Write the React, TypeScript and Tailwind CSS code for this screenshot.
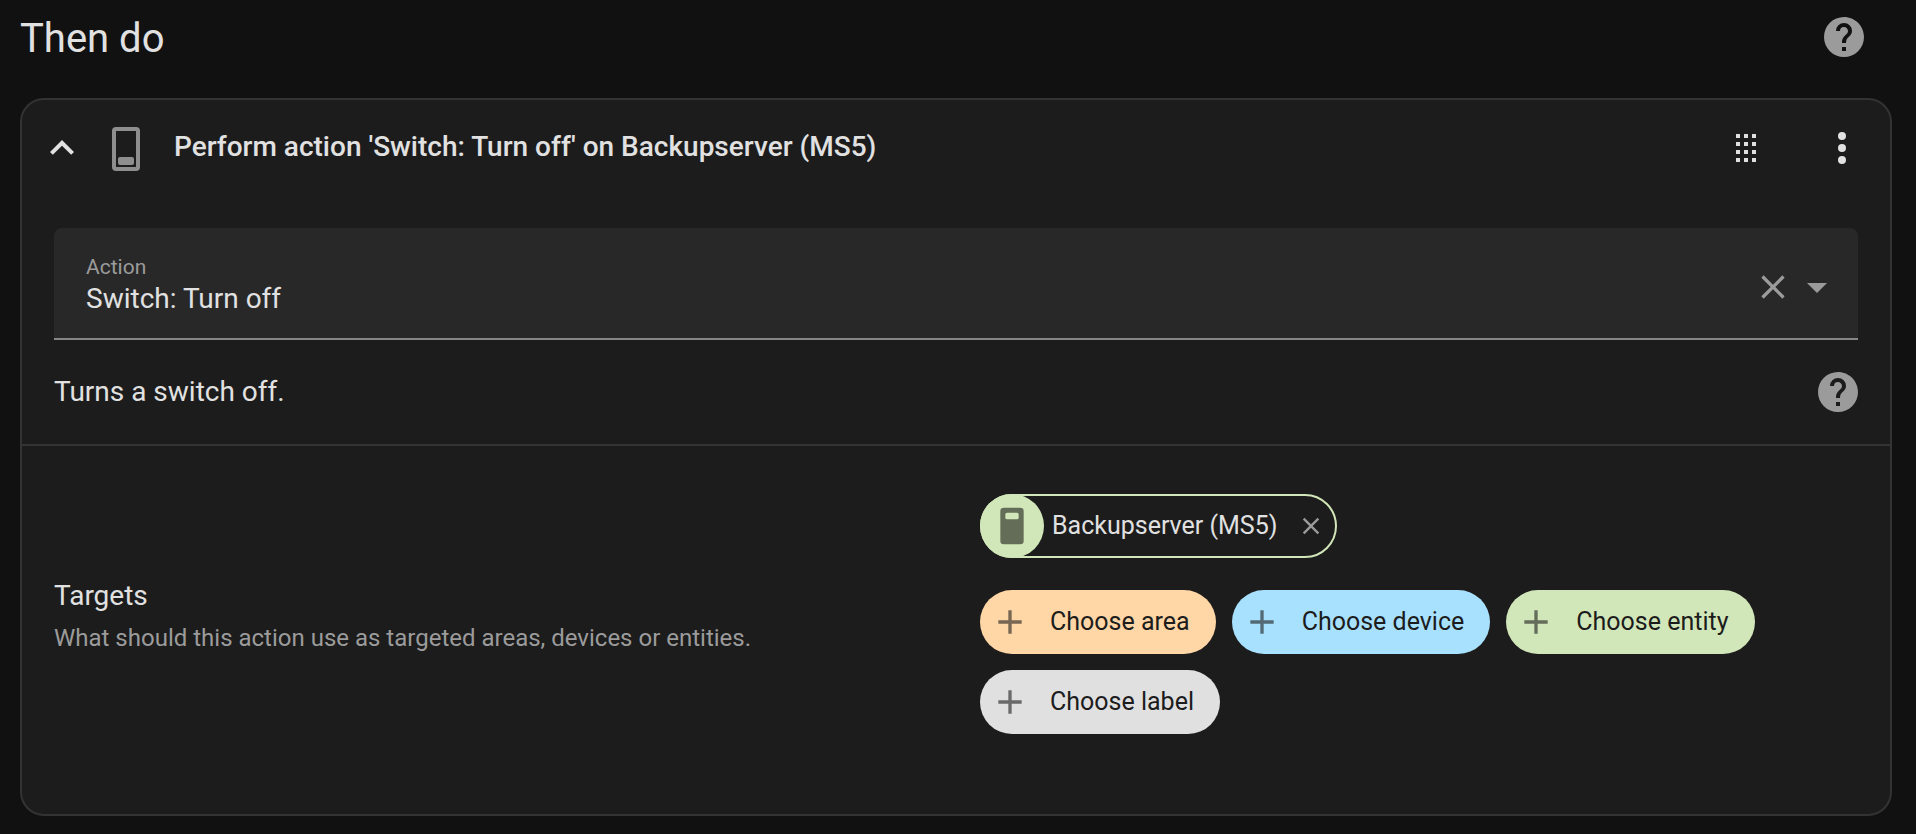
import { useState } from "react";
import type { ReactNode } from "react";

const paths = {
  help: "M15.07,11.25L14.17,12.17C13.45,12.89 13,13.5 13,15H11V14.5C11,13.39 11.45,12.39 12.17,11.67L13.41,10.41C13.78,10.05 14,9.55 14,9C14,7.89 13.1,7 12,7A2,2 0 0,0 10,9H8A4,4 0 0,1 12,5A4,4 0 0,1 16,9C16,9.88 15.64,10.67 15.07,11.25M13,19H11V17H13M12,2A10,10 0 0,0 2,12A10,10 0 0,0 12,22A10,10 0 0,0 22,12C22,6.47 17.5,2 12,2Z",
  chevronUp: "M7.41,15.41L12,10.83L16.59,15.41L18,14L12,8L6,14L7.41,15.41Z",
  switchOff:
    "M17,1H7A2,2 0 0,0 5,3V21A2,2 0 0,0 7,23H17A2,2 0 0,0 19,21V3A2,2 0 0,0 17,1M17,21H7V3H17V21M9,16H15A1,1 0 0,1 16,17V19A1,1 0 0,1 15,20H9A1,1 0 0,1 8,19V17A1,1 0 0,1 9,16Z",
  switchOn:
    "M17,1H7A2,2 0 0,0 5,3V21A2,2 0 0,0 7,23H17A2,2 0 0,0 19,21V3A2,2 0 0,0 17,1M16,7A1,1 0 0,1 15,8H9A1,1 0 0,1 8,7V5A1,1 0 0,1 9,4H15A1,1 0 0,1 16,5V7Z",
  drag: "M7,5H9V7H7V5M11,5H13V7H11V5M15,5H17V7H15V5M7,9H9V11H7V9M11,9H13V11H11V9M15,9H17V11H15V9M7,13H9V15H7V13M11,13H13V15H11V13M15,13H17V15H15V13M7,17H9V19H7V17M11,17H13V19H11V17M15,17H17V19H15V17Z",
  dots: "M12,16A2,2 0 0,1 14,18A2,2 0 0,1 12,20A2,2 0 0,1 10,18A2,2 0 0,1 12,16M12,10A2,2 0 0,1 14,12A2,2 0 0,1 12,14A2,2 0 0,1 10,12A2,2 0 0,1 12,10M12,4A2,2 0 0,1 14,6A2,2 0 0,1 12,8A2,2 0 0,1 10,6A2,2 0 0,1 12,4Z",
  close:
    "M19,6.41L17.59,5L12,10.59L6.41,5L5,6.41L10.59,12L5,17.59L6.41,19L12,13.41L17.59,19L19,17.59L13.41,12L19,6.41Z",
  menuDown: "M7,10L12,15L17,10H7Z",
  plus: "M19,13H13V19H11V13H5V11H11V5H13V11H19V13Z",
};

function Icon({ path, className }: { path: string; className: string }) {
  return (
    <svg viewBox="0 0 24 24" fill="currentColor" aria-hidden="true" className={`shrink-0 ${className}`}>
      <path d={path} />
    </svg>
  );
}

function IconButton({ label, className, children }: { label: string; className: string; children: ReactNode }) {
  return (
    <button type="button" aria-label={label} className={`flex shrink-0 items-center justify-center ${className}`}>
      {children}
    </button>
  );
}

const choices = [
  { label: "Choose area", color: "bg-[#ffd6a5]" },
  { label: "Choose device", color: "bg-[#a8e1fd]" },
  { label: "Choose entity", color: "bg-[#d2e7b9]" },
  { label: "Choose label", color: "bg-[#e0e0e0]" },
];

export default function App() {
  const [action, setAction] = useState("Switch: Turn off");

  return (
    <main className="min-h-screen bg-[#111111] pr-6 pb-4 pl-5 font-['Roboto','Noto_Sans',sans-serif] text-[#e1e1e1]">
      <header className="flex h-[74px] items-center justify-between">
        <h1 className="pt-1 text-[40px] leading-12">Then do</h1>
        <IconButton label="Learn about actions" className="h-16 w-24 text-[#9b9b9b]">
          <Icon path={paths.help} className="size-12" />
        </IconButton>
      </header>

      <section className="mt-6 rounded-3xl border-2 border-[#333333] bg-[#1c1c1c]">
        <div className="flex h-24 items-center pl-4">
          <IconButton label="Collapse action" className="size-12">
            <Icon path={paths.chevronUp} className="size-12" />
          </IconButton>
          <div className="ml-4 pt-0.5 text-[#8e8e8e]">
            <Icon path={paths.switchOff} className="size-12" />
          </div>
          <h2 className="ml-6 grow pb-0.5 text-[28px] leading-10 font-medium">
            Perform action 'Switch: Turn off' on Backupserver (MS5)
          </h2>
          <IconButton label="Move action" className="size-24">
            <Icon path={paths.drag} className="size-12" />
          </IconButton>
          <IconButton label="Action menu" className="size-24">
            <Icon path={paths.dots} className="size-12" />
          </IconButton>
        </div>

        <div className="px-8 pt-8">
          <div className="flex h-28 items-center rounded-t-lg border-b-2 border-[#868686] bg-[#282828] pr-[17px] pl-8">
            <div className="flex grow flex-col pt-1">
              <label htmlFor="action" className="text-[21px] leading-7 text-[#9b9b9b]">
                Action
              </label>
              <input
                id="action"
                type="text"
                value={action}
                onChange={(event) => setAction(event.target.value)}
                className="h-9 w-full bg-transparent text-[28px] leading-9 outline-none"
              />
            </div>
            <div className="flex items-center pt-2 text-[#9b9b9b]">
              <button type="button" aria-label="Clear" onClick={() => setAction("")}>
                <Icon path={paths.close} className="size-10" />
              </button>
              <button type="button" aria-label="Show actions">
                <Icon path={paths.menuDown} className="size-12" />
              </button>
            </div>
          </div>
        </div>

        <div className="flex h-[104px] items-center justify-between pr-7 pl-8">
          <p className="text-[28px] leading-10">Turns a switch off.</p>
          <IconButton label="Action documentation" className="size-12 text-[#9b9b9b]">
            <Icon path={paths.help} className="size-12" />
          </IconButton>
        </div>

        <div className="grid grid-cols-2 items-center gap-12 border-t-2 border-[#333333] px-8 pt-12 pb-20">
          <div className="pt-2">
            <h3 className="text-[28px] leading-10">Targets</h3>
            <p className="text-2xl leading-11 text-[#9b9b9b]">
              What should this action use as targeted areas, devices or entities.
            </p>
          </div>
          <div className="flex flex-col items-start gap-8">
            <div className="relative flex h-16 items-center rounded-full pr-3 text-[25px]">
              <div className="flex size-16 items-center justify-center rounded-full bg-[#d2e7b9] text-[#636d57]">
                <Icon path={paths.switchOn} className="size-10" />
              </div>
              <span className="ml-2">Backupserver (MS5)</span>
              <button type="button" aria-label="Remove Backupserver (MS5)" className="ml-5 text-[#9b9b9b]">
                <Icon path={paths.close} className="size-7" />
              </button>
              <span className="pointer-events-none absolute inset-0 rounded-full border-2 border-[#d2e7b9]" />
            </div>
            <div className="flex flex-wrap gap-4">
              {choices.map((choice) => (
                <button
                  key={choice.label}
                  type="button"
                  className={`flex h-16 items-center rounded-full pr-[26px] pl-[10px] text-[25px] text-[#1c1c1c] ${choice.color}`}
                >
                  <Icon path={paths.plus} className="mr-5 size-10 opacity-60" />
                  {choice.label}
                </button>
              ))}
            </div>
          </div>
        </div>
      </section>
    </main>
  );
}
